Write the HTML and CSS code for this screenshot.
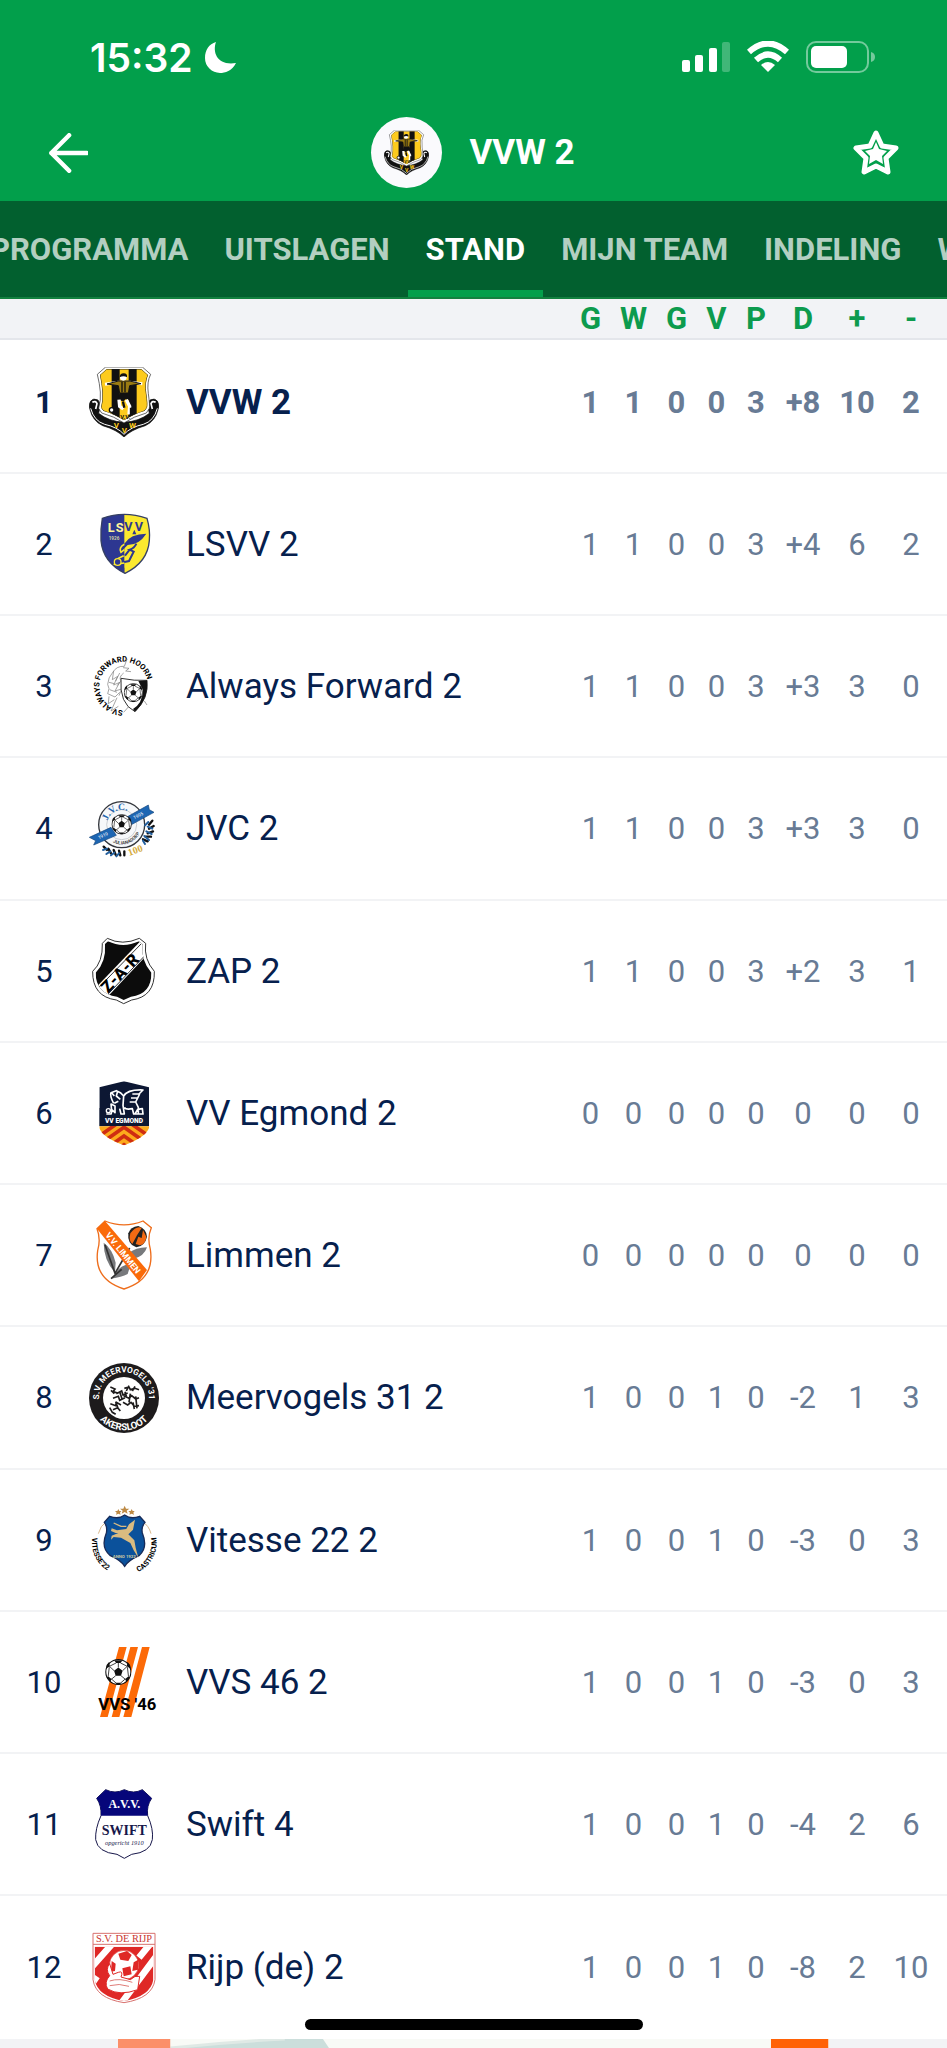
FILE: index.html
```html
<!DOCTYPE html>
<html lang="nl">
<head>
    <meta charset="UTF-8">
    <meta name="viewport" content="width=device-width, initial-scale=1.0">
    <title>VVW 2 - Stand</title>
    <link rel="stylesheet" href="styles.css">
</head>
<body>

    <!-- shared drawings -->
    <svg class="defs" width="0" height="0" aria-hidden="true">
        <symbol id="ball" viewBox="-50 -50 100 100">
            <circle r="47" fill="#fff" stroke="#111" stroke-width="4"/>
            <path d="M0-17 16-5 10 14H-10L-16-5ZM-16-44 16-44 8-34H-8ZM46-12 32-22 34-38 44-26ZM-46-12-32-22-34-38-44-26ZM26 26 38 16 44 20 30 38ZM-26 26-38 16-44 20-30 38ZM-10 40H10L6 48H-6Z" fill="#111"/>
            <path d="M0-17V-34M16-5 34-22M10 14 27 28M-10 14-27 28M-16-5-34-22M32-22 8-34M-32-22-8-34M-38 16-34-18M38 16 34-18M-26 26-8 42M26 26 8 42" stroke="#111" stroke-width="3" fill="none"/>
        </symbol>
        <symbol id="crest-vvw" viewBox="0 0 210 210">
            <path d="M5 102q8-10 22-3l8 14-6 26q30 24 76 27 46-3 76-27l-6-26 8-14q14-7 22 3 8 12 2 26-8 34-38 48-42 12-64 34-22-22-64-34-30-14-38-48-6-14 2-26Z" fill="#111" stroke="#111" stroke-width="2"/>
            <path d="M10 106q10-6 14 4l-4 16M200 106q-10-6-14 4l4 16" fill="none" stroke="#fff" stroke-width="5"/>
            <path d="M5 124q10 38 42 48 38 8 58 30 20-22 58-30 32-10 42-48" fill="none" stroke="#fff" stroke-width="3"/>
            <path d="M50 0H160L185 22Q173 44 178 80T181 124L172 138Q134 148 105 168 76 148 38 138L29 124Q36 100 34 75T25 22Z" fill="#fff" stroke="#222" stroke-width="2"/>
            <clipPath id="vvw-field"><path d="M53 6H157L177 24Q167 48 172 80T174 122L166 132Q132 142 105 160 78 142 44 132L36 122Q42 100 40 75T33 24Z"/></clipPath>
            <g clip-path="url(#vvw-field)">
                <path fill="#fdcb1d" d="M0 0h210v170H0z"/>
                <path fill="#111" d="M68 0h24v170H68zM119 0h24v170h-24z"/>
                <path d="M53 6H157L177 24Q167 48 172 80T174 122L166 132Q132 142 105 160 78 142 44 132L36 122Q42 100 40 75T33 24Z" fill="none" stroke="#222" stroke-width="3"/>
            </g>
            <path d="M48 52 88 46 122 46 160 50" stroke="#fff" stroke-width="9" fill="none"/>
            <path d="M54 51 88 42 122 42 156 50 122 56 118 78H92L88 56Z" fill="#9b7c12" stroke="#111" stroke-width="3"/>
            <path d="M99 44V76M108 44V76" stroke="#111" stroke-width="4"/>
            <circle cx="103" cy="31" r="10" fill="#fff"/>
            <path d="M92 31q0-12 12-12t10 12q-10-7-22 0Z" fill="#111"/>
            <path d="M91 78h29l3 22-14-3-6 7-15-7Z" fill="#111"/>
            <path d="M90 98 92 118 103 126M112 98 122 118 120 142" stroke="#fff" stroke-width="10" fill="none"/>
            <path d="M102 104 106 122M126 122v22" stroke="#111" stroke-width="7"/>
            <circle cx="68" cy="129" r="7" fill="#fff" stroke="#111" stroke-width="4"/>
            <text class="crest-mark" x="94" y="156" font-size="18">V.V.</text>
            <g class="crest-gold" font-size="24">
                <text x="74" y="182">V</text>
                <text x="98" y="197">V</text>
                <text x="120" y="182">W</text>
            </g>
        </symbol>
    </svg>

    <div class="page">
        <header class="top">
            <div class="status-bar">
                <span class="clock">15:32</span>
                <svg class="moon" viewBox="0 0 32 32" aria-hidden="true"><path d="M11 1C7 12 13 25 31 22 27 30 20 32 15 32A15 15 0 0 1 0 17C0 9 4 3 11 1Z" fill="#fff"/></svg>
                <svg class="signal" viewBox="0 0 48 32" aria-hidden="true">
                    <g fill="#fff">
                        <rect y="19" width="8" height="12" rx="2"/>
                        <rect x="13" y="14" width="8" height="17" rx="2"/>
                        <rect x="27" y="7" width="8" height="24" rx="2"/>
                        <rect x="40" y="1" width="8" height="30" rx="2" opacity=".25"/>
                    </g>
                </svg>
                <svg class="wifi" viewBox="0 0 42 32" aria-hidden="true">
                    <path d="M2 11Q21-6 40 11M9 19Q21 8 33 19" fill="none" stroke="#fff" stroke-width="6"/>
                    <path d="M14 24Q21 18 28 24L21 31Z" fill="#fff"/>
                </svg>
                <svg class="battery" viewBox="0 0 70 32" aria-hidden="true">
                    <rect x="1" y="1" width="61" height="30" rx="9" fill="none" stroke="#fff" stroke-width="2" opacity=".45"/>
                    <rect x="5" y="5" width="36" height="22" rx="5" fill="#fff"/>
                    <path d="M65 11q4 1 4 5t-4 5Z" fill="#fff" opacity=".45"/>
                </svg>
            </div>
            <div class="app-bar">
                <button class="icon-button" type="button" aria-label="Terug">
                    <svg class="arrow" viewBox="0 0 36 36"><path d="M19 2 3 18 19 34M3 18H35" fill="none" stroke="#fff" stroke-width="4" stroke-linecap="round" stroke-linejoin="round"/></svg>
                </button>
                <div class="team">
                    <span class="team-logo"><svg viewBox="0 0 210 210"><use href="#crest-vvw"/></svg></span>
                    <h1>VVW 2</h1>
                </div>
                <button class="icon-button" type="button" aria-label="Favoriet">
                    <svg class="star" viewBox="0 0 46 46">
                        <path d="M23 3 29 16 43 18 33 28 35 42 23 36 11 42 13 28 3 18 17 16Z" fill="none" stroke="#fff" stroke-width="5" stroke-linejoin="round"/>
                        <path d="M23 12 26 19 34 21 29 26 30 34 23 30 16 34 17 26 12 21 20 19Z" fill="#fff"/>
                    </svg>
                </button>
            </div>
        </header>

        <nav class="tabs">
            <a href="#programma">PROGRAMMA</a>
            <a href="#uitslagen">UITSLAGEN</a>
            <a href="#stand" class="active">STAND</a>
            <a href="#team">MIJN TEAM</a>
            <a href="#indeling">INDELING</a>
            <a href="#wedstrijden">WEDSTRIJDEN</a>
        </nav>

        <table class="standings">
            <colgroup>
                <col class="col-rank"><col class="col-crest"><col>
                <col class="col-num"><col class="col-num"><col class="col-num">
                <col class="col-lost"><col class="col-points"><col class="col-diff"><col class="col-for"><col class="col-diff"><col class="col-edge">
            </colgroup>
            <thead>
                <tr><th></th><th></th><th></th><th>G</th><th>W</th><th>G</th><th>V</th><th>P</th><th>D</th><th>+</th><th>-</th><th></th></tr>
            </thead>
            <tbody>
                <tr class="own">
                    <td class="rank">1</td>
                    <td><svg class="crest" viewBox="0 0 210 210"><use href="#crest-vvw"/></svg></td>
                    <td class="name">VVW 2</td>
                    <td>1</td><td>1</td><td>0</td><td>0</td><td>3</td><td>+8</td><td>10</td><td>2</td><td></td>
                </tr>
                <tr>
                    <td class="rank">2</td>
                    <td><svg class="crest" viewBox="0 0 210 210">
                        <clipPath id="lsvv"><path d="M40 28Q105 4 174 28 184 62 181 95 176 160 108 193 42 160 36 95 34 60 40 28Z"/></clipPath>
                        <g clip-path="url(#lsvv)">
                            <path fill="#fbe92f" d="M0 0h210v210H0z"/>
                            <path fill="#2d3791" d="M0 0h106v210H0z"/>
                            <path d="M172 74Q124 74 106 104L98 126 116 108Q150 108 172 74Z" fill="#2d3791"/>
                            <path d="M142 104Q136 118 122 122L134 128 120 156 92 162M122 122 108 140" fill="none" stroke="#2d3791" stroke-width="6"/>
                            <path d="M106 106Q88 116 96 130L106 122M104 140 88 148 76 166 106 162" fill="none" stroke="#fbe92f" stroke-width="5"/>
                            <circle cx="86" cy="159" r="10" fill="#2d3791" stroke="#fbe92f" stroke-width="4"/>
                            <path fill="#2d3791" d="M76 176h30v18H76zM130 76l6-14 6 14z"/>
                        </g>
                        <path d="M40 28Q105 4 174 28 184 62 181 95 176 160 108 193 42 160 36 95 34 60 40 28Z" fill="none" stroke="#364065" stroke-width="4"/>
                        <g font-weight="700" font-size="38">
                            <text x="56" y="70" fill="#fff79a">L</text>
                            <text x="80" y="70" fill="#fff79a">S</text>
                            <text x="106" y="66" fill="#2d3791">V</text>
                            <text x="137" y="66" fill="#2d3791">V</text>
                        </g>
                        <text x="59" y="94" fill="#cfcf9d" font-size="14" font-weight="700">1926</text>
                    </svg></td>
                    <td class="name">LSVV 2</td>
                    <td>1</td><td>1</td><td>0</td><td>0</td><td>3</td><td>+4</td><td>6</td><td>2</td><td></td>
                </tr>
                <tr>
                    <td class="rank">3</td>
                    <td><svg class="crest" viewBox="0 0 210 210">
                        <path id="af-arc" d="M104 178A73 73 0 0 1 104 32 73 73 0 0 1 177 105" fill="none"/>
                        <g font-size="23" font-weight="700">
                            <text><textPath href="#af-arc" startOffset="2">SV ALWAYS FORWARD</textPath></text>
                            <text><textPath href="#af-arc" startOffset="246">HOORN</textPath></text>
                        </g>
                        <path d="M114 24 106 46Q82 44 70 66 58 78 56 100 64 112 56 128L78 138 92 124M102 50l18 2-10 8 16 2M74 60l-4 26 16-10-12 26 18-8-14 26 20-6-8 20M92 66l-12 24M60 94l16 4M62 116l22 8M60 136l-2 22 18-12M104 66q-16 12-8 24l-12 14M84 140l-18 40 22-14M118 168l-14 16M166 150l8 12" fill="none" stroke="#777" stroke-width="2"/>
                        <path d="M96 82Q136 90 174 88 180 142 138 182 90 158 96 82Z" fill="#fff" stroke="#333" stroke-width="3"/>
                        <path d="M148 90 174 88Q180 142 138 182L132 174Q160 158 162 118Z" fill="#111"/>
                        <use href="#ball" x="104" y="96" width="58" height="58"/>
                    </svg></td>
                    <td class="name">Always Forward 2</td>
                    <td>1</td><td>1</td><td>0</td><td>0</td><td>3</td><td>+3</td><td>3</td><td>0</td><td></td>
                </tr>
                <tr>
                    <td class="rank">4</td>
                    <td><svg class="crest" viewBox="0 0 210 210">
                        <circle cx="98" cy="92" r="69" fill="#f6f8fa" stroke="#33363c" stroke-width="4"/>
                        <circle cx="98" cy="92" r="45" fill="none" stroke="#b5bac0" stroke-width="2"/>
                        <path id="jvc-top" d="M54 92A44 44 0 0 1 142 92" fill="none"/>
                        <path id="jvc-bottom" d="M66 142A60 60 0 0 0 158 92" fill="none"/>
                        <text class="serif" font-size="29" font-weight="700" fill="#1d63ad"><textPath href="#jvc-top" startOffset="12">J.V.C.</textPath></text>
                        <text font-size="14" font-weight="700" fill="#444"><textPath href="#jvc-bottom" startOffset="6">JULIANADORP</textPath></text>
                        <path d="M1 130 66 100 82 124 14 153 20 140Z" fill="#1d66b3" stroke="#14467c" stroke-width="2"/>
                        <path d="M112 70 178 33 181 47 195 55 120 96Z" fill="#1d66b3" stroke="#14467c" stroke-width="2"/>
                        <text transform="translate(30 136) rotate(-25)" font-size="14" fill="#fff">1919</text>
                        <text transform="translate(136 76) rotate(-27)" font-size="14" fill="#fff">1995</text>
                        <use href="#ball" x="67" y="60" width="62" height="62"/>
                        <path d="M44 158 54 168M58 164 66 178M74 168 80 182M90 170 94 184M106 172 106 184M190 80 180 92M194 96 180 104M192 112 176 118M186 128 170 128M176 142 162 136" stroke="#111" stroke-width="7" stroke-linecap="round"/>
                        <path d="M42 168 54 164M52 180 64 172M66 184 76 176M82 187 90 178M168 94 178 84M176 98 190 104M172 112 188 120M166 126 180 138M162 140 168 150" stroke="#225f9e" stroke-width="6" stroke-linecap="round"/>
                        <text class="serif" transform="translate(121 186) rotate(-20)" font-size="30" font-weight="700" fill="#d5ab3d">100</text>
                    </svg></td>
                    <td class="name">JVC 2</td>
                    <td>1</td><td>1</td><td>0</td><td>0</td><td>3</td><td>+3</td><td>3</td><td>0</td><td></td>
                </tr>
                <tr>
                    <td class="rank">5</td>
                    <td><svg class="crest" viewBox="0 0 210 210">
                        <path d="M55 7Q100 30 151 7L170 22Q164 70 196 106 198 182 128 192L104 203 82 192Q10 182 11 106 42 78 40 22Z" fill="#fff" stroke="#333" stroke-width="3"/>
                        <clipPath id="zap"><path d="M57 16Q102 38 150 16L161 25Q154 72 187 110 188 174 126 182L104 192 84 182Q20 172 20 110 52 78 48 24Z"/></clipPath>
                        <g clip-path="url(#zap)">
                            <path fill="#0c0c0c" d="M0 0h210v210H0z"/>
                            <path d="M14 162 154 16 180 50 50 188Z" fill="#fff"/>
                            <path d="M26 158 156 24M46 186 174 52" stroke="#333" stroke-width="3"/>
                        </g>
                        <text transform="translate(57 173) rotate(-46)" font-size="49" font-weight="900">Z-A-R</text>
                    </svg></td>
                    <td class="name">ZAP 2</td>
                    <td>1</td><td>1</td><td>0</td><td>0</td><td>3</td><td>+2</td><td>3</td><td>1</td><td></td>
                </tr>
                <tr>
                    <td class="rank">6</td>
                    <td><svg class="crest" viewBox="0 0 210 210">
                        <clipPath id="egmond"><path d="M105 10 180 28V150Q170 178 105 202 40 178 31 150V28Z"/></clipPath>
                        <g clip-path="url(#egmond)">
                            <path fill="#0c1733" d="M0 0h210v145H0z"/>
                            <path fill="#fcaa1c" d="M0 145h210v65H0z"/>
                            <path d="M5 192 105 122 205 192M5 218 105 148 205 218M5 244 105 174 205 244M5 270 105 200 205 270" fill="none" stroke="#cf2d12" stroke-width="11"/>
                            <path fill="#0c1733" d="M0 90h210v54H0z"/>
                        </g>
                        <path d="M52 108H66L70 96 78 104V84L66 78 68 98M74 76Q62 54 66 44L82 38 94 44 104 54 102 82 106 108H96L92 92M104 54Q116 34 162 36L150 48H130M152 48 146 60H126M146 60 140 72H122M140 72 148 88 148 108H134L130 92Q110 96 106 88M138 108 146 94 160 92 162 108H148M86 40 82 54 94 64M76 76 88 70M68 44l8 10" fill="none" stroke="#fff" stroke-width="5" stroke-linejoin="round"/>
                        <circle cx="58" cy="98" r="6" fill="none" stroke="#fff" stroke-width="4"/>
                        <text x="105" y="135" text-anchor="middle" font-size="20" font-weight="900" fill="#fff">VV EGMOND</text>
                    </svg></td>
                    <td class="name">VV Egmond 2</td>
                    <td>0</td><td>0</td><td>0</td><td>0</td><td>0</td><td>0</td><td>0</td><td>0</td><td></td>
                </tr>
                <tr>
                    <td class="rank">7</td>
                    <td><svg class="crest" viewBox="0 0 210 210">
                        <path d="M48 3Q105 26 162 3L187 23Q174 52 184 88 198 178 105 207 14 178 26 92 36 56 24 26Z" fill="#fff" stroke="#ee6d1b" stroke-width="4"/>
                        <path d="M44 68Q70 86 80 128L78 158Q44 120 44 68ZM78 164Q88 138 126 130L116 162Q98 172 66 176ZM118 100Q140 82 174 82 166 110 130 118Z" fill="#77797c"/>
                        <path d="M48 74 78 160 122 84M66 176 98 148" stroke="#333" stroke-width="5" fill="none"/>
                        <path d="M118 40Q124 20 148 18 172 26 174 50 168 78 142 82 114 74 118 40Z" fill="#222"/>
                        <path d="M124 40Q142 16 158 24L144 46 130 72Q118 62 124 40ZM162 30 172 50Q170 72 152 76L140 72 148 50 158 54Z" fill="#f26a14"/>
                        <path d="M48 3 24 26 150 184 174 150Z" fill="#fa6a09"/>
                        <text transform="translate(48 46) rotate(51)" font-size="26" font-weight="700" fill="#fff">V.V. LIMMEN</text>
                    </svg></td>
                    <td class="name">Limmen 2</td>
                    <td>0</td><td>0</td><td>0</td><td>0</td><td>0</td><td>0</td><td>0</td><td>0</td><td></td>
                </tr>
                <tr>
                    <td class="rank">8</td>
                    <td><svg class="crest" viewBox="0 0 210 210">
                        <circle cx="105" cy="105" r="105" fill="#1d1b1c"/>
                        <circle cx="105" cy="105" r="63" fill="#fff"/>
                        <path id="mv-top" d="M32 120A75 75 0 1 1 178 120" fill="none"/>
                        <path id="mv-bottom" d="M8 105A97 97 0 0 0 202 105" fill="none"/>
                        <g font-weight="700" fill="#fff" text-anchor="middle">
                            <text font-size="25"><textPath href="#mv-top" startOffset="50%">S.V. MEERVOGELS '31</textPath></text>
                            <text font-size="29"><textPath href="#mv-bottom" startOffset="50%">AKERSLOOT</textPath></text>
                        </g>
                        <path d="M64 72l14 6-6 8 14 4M82 92l16-8 4 12 14-6M106 76l14-4 4 8 14-4 12 4M72 106l16-6 4 12 16-8M104 98l16 8 8-8 12 10 10-4M64 122l16 6 2-10 14 8M102 118l14 8 10-8 10 12 14-2M72 140l14-6 8 10M62 134l8 14 10 6M108 86l4 14M92 86l8 24M80 116l8 22M124 92l-4 26M140 100l4 36M132 118l4 20M66 82l10 10M112 84l8-16M130 84l8-14" fill="none" stroke="#1d1b1c" stroke-width="5"/>
                    </svg></td>
                    <td class="name">Meervogels 31 2</td>
                    <td>1</td><td>0</td><td>0</td><td>1</td><td>0</td><td>-2</td><td>1</td><td>3</td><td></td>
                </tr>
                <tr>
                    <td class="rank">9</td>
                    <td><svg class="crest" viewBox="0 0 210 210">
                        <path d="M28 86Q34 62 52 50M186 86Q180 62 160 50" fill="none" stroke="#d9b98d" stroke-width="3"/>
                        <path d="M107 2 111 11 121 11 113 17 116 26 107 21 98 26 101 17 93 11 103 11ZM88 12 91 18 97 18 93 23 95 29 88 26 81 29 83 23 78 18 85 18ZM128 12 131 18 137 18 133 23 135 29 128 26 121 29 123 23 118 18 125 18Z" fill="#bd8a45"/>
                        <path d="M62 34Q88 44 107 30 126 44 152 34L168 52Q156 66 160 84 178 128 150 152 118 166 107 184 96 166 64 152 34 128 52 84 56 66 46 52Z" fill="#0b519b" stroke="#172b58" stroke-width="4"/>
                        <path d="M138 44 120 58 112 72 84 76 68 70 66 78 80 84 88 84 68 92 66 104 74 96 96 98 124 114 134 136 148 158 140 128 136 106 118 88 132 74Z" fill="#dabb80"/>
                        <path d="M74 54 96 64 112 64" fill="none" stroke="#dabb80" stroke-width="4"/>
                        <text x="106" y="160" text-anchor="middle" font-size="13" font-weight="700" fill="#c7c6a0">ANNO 1922</text>
                        <path id="vit-arc" d="M11 94A97 97 0 1 0 201 94" fill="none"/>
                        <g font-size="22" font-weight="700">
                            <text><textPath href="#vit-arc" startOffset="4">VITESSE'22</textPath></text>
                            <text text-anchor="end"><textPath href="#vit-arc" startOffset="99%">CASTRICUM</textPath></text>
                        </g>
                    </svg></td>
                    <td class="name">Vitesse 22 2</td>
                    <td>1</td><td>0</td><td>0</td><td>1</td><td>0</td><td>-3</td><td>0</td><td>3</td><td></td>
                </tr>
                <tr>
                    <td class="rank">10</td>
                    <td><svg class="crest" viewBox="0 0 210 210">
                        <path d="M90 0H113L56 210H33ZM124 0H147L91 210H68ZM159 0H182L127 210H103Z" fill="#fc6a08"/>
                        <use href="#ball" x="48" y="35" width="80" height="80"/>
                        <text x="28" y="188" font-size="50" font-weight="700">VVS '46</text>
                    </svg></td>
                    <td class="name">VVS 46 2</td>
                    <td>1</td><td>0</td><td>0</td><td>1</td><td>0</td><td>-3</td><td>0</td><td>3</td><td></td>
                </tr>
                <tr>
                    <td class="rank">11</td>
                    <td><svg class="crest" viewBox="0 0 210 210">
                        <path d="M50 2Q78 16 106 2 134 16 160 2L188 28Q172 50 176 80 194 120 190 152 184 190 128 196L106 208 84 196Q26 190 20 152 18 120 36 80 38 50 23 28Z" fill="#fff" stroke="#17174a" stroke-width="3"/>
                        <path d="M50 2Q78 16 106 2 134 16 160 2L188 28Q172 50 176 80H36Q38 50 23 28Z" fill="#06067a"/>
                        <g class="serif" text-anchor="middle">
                            <text x="106" y="58" font-size="36" font-weight="700" fill="#fff">A.V.V.</text>
                            <text x="106" y="139" font-size="42" font-weight="700" fill="#17174a">SWIFT</text>
                            <text x="106" y="168" font-size="19" font-style="italic" fill="#17174a">opgericht 1910</text>
                        </g>
                    </svg></td>
                    <td class="name">Swift 4</td>
                    <td>1</td><td>0</td><td>0</td><td>1</td><td>0</td><td>-4</td><td>2</td><td>6</td><td></td>
                </tr>
                <tr>
                    <td class="rank">12</td>
                    <td><svg class="crest" viewBox="0 0 210 210">
                        <path d="M12 1H198V140Q190 196 105 209 20 196 12 140Z" fill="#fff" stroke="#d8716e" stroke-width="3"/>
                        <text class="serif" x="105" y="27" text-anchor="middle" font-size="31" fill="#c93530">S.V. DE RIJP</text>
                        <path d="M12 34H198" stroke="#d8716e" stroke-width="3"/>
                        <clipPath id="rijp"><path d="M17 41H193V140Q184 190 105 204 26 190 17 140Z"/></clipPath>
                        <g clip-path="url(#rijp)">
                            <path fill="#df2826" d="M0 0h210v210H0z"/>
                            <path d="M72 30 10 100M186 30 150 74M218 48 90 220M24 130 10 150" stroke="#fff" stroke-width="20"/>
                            <circle cx="105" cy="96" r="44" fill="#fff" stroke="#df2826" stroke-width="2"/>
                            <path d="M88 62 114 54 128 66 118 84 94 80ZM134 88 148 80 147 110 130 114ZM68 84 80 92 78 114 66 116ZM100 106 124 100 128 124 104 130Z" fill="#df2826"/>
                            <path d="M62 92Q48 110 62 128 44 148 56 168 92 190 146 170L152 130Q138 126 124 140L96 132Q104 112 88 118L72 124Z" fill="#fff" stroke="#df2826" stroke-width="3"/>
                            <path d="M62 144Q90 134 130 148M62 158Q90 150 120 160" fill="none" stroke="#df7c78" stroke-width="3"/>
                        </g>
                    </svg></td>
                    <td class="name">Rijp (de) 2</td>
                    <td>1</td><td>0</td><td>0</td><td>1</td><td>0</td><td>-8</td><td>2</td><td>10</td><td></td>
                </tr>
            </tbody>
        </table>

        <div class="ad">
            <svg viewBox="0 0 707 9" preserveAspectRatio="none" aria-hidden="true">
                <path fill="#f8faf6" d="M0 0h707v9H0z"/>
                <path d="M52 9Q110 3 166 0H204L210 9Z" fill="#cbdedb"/>
                <path d="M52 9Q110 3 166 0" fill="none" stroke="#dfe9e5" stroke-width="3"/>
                <path fill="#fb8f69" d="M0 0h52v9H0z"/>
                <path fill="#ff6206" d="M650 0h57v9H650z"/>
            </svg>
        </div>
        <div class="home-indicator"></div>
    </div>

</body>
</html>
```
FILE: styles.css
```css
* {
    box-sizing: border-box;
}
body {
    margin: 0;
    font-family: Roboto, "Liberation Sans", sans-serif;
    background: #fff;
}
.defs {
    position: absolute;
}
.page {
    position: relative;
    display: flex;
    flex-direction: column;
    height: 100vh;
    overflow: hidden;
}

/* header */
.top {
    background: #029f4b;
    color: #fff;
}
.status-bar {
    display: flex;
    align-items: center;
    height: 104px;
    padding: 10px 71px 0 90px;
}
.clock {
    font-family: Inter, sans-serif;
    font-size: 39px;
    font-weight: 600;
}
.moon {
    width: 32px;
    height: 32px;
    margin-left: 12px;
}
.signal {
    width: 48px;
    height: 32px;
    margin-left: auto;
}
.wifi {
    width: 42px;
    height: 32px;
    margin: 0 17px;
}
.battery {
    width: 70px;
    height: 32px;
}
.app-bar {
    display: flex;
    align-items: center;
    justify-content: space-between;
    height: 97px;
    padding: 0 48px;
}
.icon-button {
    display: flex;
    padding: 0;
    border: 0;
    background: none;
}
.arrow {
    width: 40px;
    height: 40px;
}
.star {
    width: 46px;
    height: 46px;
}
.team {
    display: flex;
    align-items: center;
    gap: 27px;
    padding-left: 5px;
}
.team-logo {
    display: flex;
    align-items: center;
    justify-content: center;
    width: 71px;
    height: 71px;
    border-radius: 50%;
    background: #fafafd;
}
.team-logo svg {
    width: 45px;
    height: 45px;
}
h1 {
    margin: 0;
    font-size: 35px;
    font-weight: 700;
}

/* tabs */
.tabs {
    display: flex;
    height: 98px;
    padding-top: 2px;
    margin-left: -28px;
    background: #02602f;
    border-bottom: 2px solid #12813f;
}
.tabs a {
    flex: none;
    padding: 0 18px;
    font-size: 31px;
    font-weight: 700;
    line-height: 93px;
    color: #b3cfc1;
    text-decoration: none;
}
.tabs .active {
    color: #fff;
    border-bottom: 7px solid #029f4b;
}

/* standings */
.standings {
    width: 100%;
    table-layout: fixed;
    border-collapse: separate;
    border-spacing: 0;
}
.col-rank {
    width: 88px;
}
.col-crest {
    width: 72px;
}
.col-num {
    width: 43px;
}
.col-lost {
    width: 37px;
}
.col-points {
    width: 42px;
}
.col-diff {
    width: 52px;
}
.col-for {
    width: 56px;
}
.col-edge {
    width: 10px;
}
.standings th {
    height: 41px;
    padding: 0;
    background: #f2f3f6;
    border-bottom: 2px solid #e4e6eb;
    color: #0d9b4e;
    font-size: 31px;
    line-height: 38px;
}
.standings td {
    height: 142px;
    padding: 0;
    border-bottom: 2px solid #f2f3f5;
    color: #687b95;
    font-size: 31px;
    text-align: center;
    white-space: nowrap;
}
.standings tbody tr:nth-child(4n) td {
    height: 143px;
}
.standings tbody tr:first-child td {
    height: 134px;
    padding-bottom: 8px;
}
.standings tbody tr:last-child td {
    border-bottom: 0;
}
.standings .rank {
    color: #06204d;
}
.standings .name {
    padding-left: 26px;
    color: #06204d;
    font-size: 35px;
    text-align: left;
}
.own td {
    font-weight: 700;
}
.crest {
    display: block;
    width: 70px;
    height: 70px;
    margin: 0 auto;
    overflow: visible;
}
.serif {
    font-family: "Liberation Serif", serif;
}
.crest-mark {
    font-weight: 700;
    fill: #111;
}
.crest-gold {
    font-weight: 700;
    fill: #fdcb1d;
}

/* bottom */
.ad {
    flex: 1;
    display: flex;
    justify-content: center;
    background: #f2f3f5;
}
.ad svg {
    width: 75%;
    height: 9px;
}
.home-indicator {
    position: absolute;
    left: 50%;
    bottom: 18px;
    width: 338px;
    height: 11px;
    margin-left: -169px;
    border-radius: 6px;
    background: #000;
}
```
